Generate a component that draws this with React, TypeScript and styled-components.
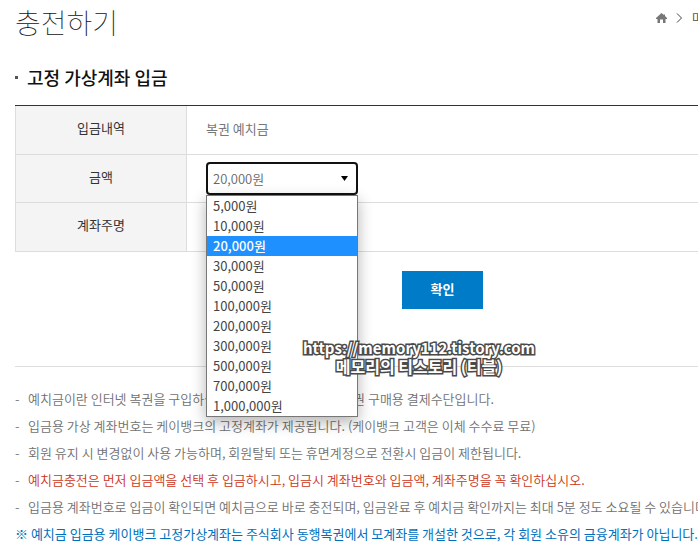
import React, { useState } from "react";
import styled, { createGlobalStyle } from "styled-components";

const AMOUNTS = [
  "5,000원",
  "10,000원",
  "20,000원",
  "30,000원",
  "50,000원",
  "100,000원",
  "200,000원",
  "300,000원",
  "500,000원",
  "700,000원",
  "1,000,000원",
];

const NOTES: { text: string; alert?: boolean }[] = [
  { text: "예치금이란 인터넷 복권을 구입하실 때 사용할 수 있는 전용 복권 구매용 결제수단입니다." },
  { text: "입금용 가상 계좌번호는 케이뱅크의 고정계좌가 제공됩니다. (케이뱅크 고객은 이체 수수료 무료)" },
  { text: "회원 유지 시 변경없이 사용 가능하며, 회원탈퇴 또는 휴면계정으로 전환시 입금이 제한됩니다." },
  {
    text: "예치금충전은 먼저 입금액을 선택 후 입금하시고, 입금시 계좌번호와 입금액, 계좌주명을 꼭 확인하십시오.",
    alert: true,
  },
  {
    text: "입금용 계좌번호로 입금이 확인되면 예치금으로 바로 충전되며, 입금완료 후 예치금 확인까지는 최대 5분 정도 소요될 수 있습니다.",
  },
];

const GlobalStyle = createGlobalStyle`
  * { box-sizing: border-box; }
  html { overflow: hidden; }
  body {
    margin: 0;
    background: #fff;
    color: #777;
    font-family: "Noto Sans CJK KR", "Noto Sans CJK SC", sans-serif;
    font-size: 13px;
    line-height: 20px;
  }
`;

const Page = styled.main`
  position: relative;
  min-width: 870px;
  padding: 0 0 0 15px;
`;

const Header = styled.header`
  display: flex;
  justify-content: space-between;
  align-items: flex-start;
`;

const Title = styled.h1`
  margin: 0;
  padding-top: 2px;
  font-size: 28px;
  line-height: 40px;
  font-weight: 100;
  color: #111;
`;

const Breadcrumb = styled.nav`
  display: flex;
  align-items: center;
  gap: 9px;
  width: 214px;
  padding-top: 8px;
  font-size: 12px;

  a {
    display: flex;
    color: #555;
    text-decoration: none;
  }
`;

const SectionTitle = styled.h2`
  display: flex;
  align-items: center;
  gap: 9px;
  margin: 22px 0 14px;
  font-size: 18px;
  line-height: 27px;
  font-weight: 500;
  color: #111;

  &::before {
    content: "";
    width: 3px;
    height: 3px;
    background: #555;
  }
`;

const FormTable = styled.table`
  width: 100%;
  border-collapse: separate;
  border-spacing: 0;
  border-top: 1px solid #333;
`;

const Row = styled.tr`
  height: 49px;

  &:nth-child(even) {
    height: 48px;
  }
`;

const LabelCell = styled.th`
  width: 172px;
  padding: 0 0 4px;
  border: 1px solid #ddd;
  border-top: 0;
  background: #f4f4f4;
  color: #333;
  font-weight: 400;
`;

const ValueCell = styled.td`
  padding: 0 19px 2px;
  border-bottom: 1px solid #ddd;
`;

const SelectCell = styled(ValueCell)`
  padding-bottom: 0;
`;

const Picker = styled.div`
  position: relative;
  width: 152px;
`;

const AmountSelect = styled.select`
  display: block;
  width: 100%;
  height: 33px;
  padding: 0 5px;
  appearance: none;
  border: 2px solid #111;
  border-radius: 4px;
  background: #fff;
  color: #666;
  font-family: inherit;
  font-size: 13px;
  font-weight: 350;
  outline: none;
`;

const Caret = styled.svg`
  position: absolute;
  top: 14px;
  right: 10px;
  pointer-events: none;
`;

const OptionList = styled.ul`
  position: absolute;
  z-index: 1;
  top: 100%;
  left: 0;
  width: 100%;
  margin: 0;
  padding: 0;
  list-style: none;
  border: 1px solid #777;
  background: #fff;
  box-shadow: 0 5px 14px rgba(0, 0, 0, 0.3);
`;

const OptionItem = styled.li<{ $selected: boolean }>`
  height: 20px;
  padding: 0 6px;
  background: ${(p) => (p.$selected ? "#1e90ff" : "transparent")};
  color: ${(p) => (p.$selected ? "#fff" : "#444")};
  font-weight: ${(p) => (p.$selected ? 500 : 400)};
  cursor: default;
`;

const Actions = styled.div`
  display: flex;
  justify-content: center;
  padding: 19px 0 57px;
  border-bottom: 1px solid #ddd;
`;

const ConfirmButton = styled.button`
  width: 81px;
  height: 38px;
  padding: 0 0 4px;
  border: 0;
  background: #007bc7;
  color: #fff;
  font-family: inherit;
  font-size: 13px;
  font-weight: 700;
`;

const NoteList = styled.ul`
  margin: 18px 0 0;
  padding: 0;
  list-style: none;
  white-space: nowrap;
`;

const Note = styled.li<{ $alert?: boolean }>`
  display: flex;
  gap: 8px;
  line-height: 27px;
  font-weight: 350;
  color: ${(p) => (p.$alert ? "#cc3520" : "#707070")};

  &::before {
    content: "-";
    width: 5px;
    color: #777;
  }
`;

const Footnote = styled.p`
  margin: 0;
  line-height: 27px;
  color: #0070bd;
  white-space: nowrap;
`;

const Watermark = styled.div`
  position: absolute;
  z-index: 2;
  top: 339px;
  left: 302px;
  width: 234px;
  text-align: center;
  font-size: 15px;
  line-height: 18px;
  font-weight: 700;
  color: #fff;
  white-space: nowrap;
  -webkit-text-stroke: 3px #4a4a4a;
  paint-order: stroke fill;
  pointer-events: none;
`;

const WatermarkName = styled.div`
  font-size: 16px;
`;

export default function App() {
  const [amount, setAmount] = useState("20,000원");

  return (
    <>
      <GlobalStyle />
      <Page>
        <Header>
          <Title>충전하기</Title>
          <Breadcrumb aria-label="현재 위치">
            <a href="#home" aria-label="홈">
              <svg width="11" height="10" viewBox="0 0 11 10">
                <path
                  d="M5.5 0 8 2V1.500H9V3L11 5V6H9.500V10H7V6.500H4V10H1.500V6H0V5Z"
                  fill="#777"
                />
              </svg>
            </a>
            <svg width="7" height="10" viewBox="0 0 7 10">
              <path d="M1 .5 5.5 5 1 9.5" fill="none" stroke="#444" />
            </svg>
            <a href="#mypage">마이페이지</a>
          </Breadcrumb>
        </Header>

        <SectionTitle>고정 가상계좌 입금</SectionTitle>
        <FormTable>
          <tbody>
            <Row>
              <LabelCell scope="row">입금내역</LabelCell>
              <ValueCell>복권 예치금</ValueCell>
            </Row>
            <Row>
              <LabelCell scope="row">
                <label htmlFor="amount">금액</label>
              </LabelCell>
              <SelectCell>
                <Picker>
                  <AmountSelect id="amount" value={amount} onChange={(e) => setAmount(e.target.value)}>
                    {AMOUNTS.map((a) => (
                      <option key={a}>{a}</option>
                    ))}
                  </AmountSelect>
                  <Caret width="7" height="5" viewBox="0 0 7 5">
                    <path d="M0 0H7L3.5 5Z" fill="#000" />
                  </Caret>
                  <OptionList role="listbox" aria-label="금액">
                    {AMOUNTS.map((a) => (
                      <OptionItem
                        key={a}
                        role="option"
                        aria-selected={a === amount}
                        $selected={a === amount}
                        onClick={() => setAmount(a)}
                      >
                        {a}
                      </OptionItem>
                    ))}
                  </OptionList>
                </Picker>
              </SelectCell>
            </Row>
            <Row>
              <LabelCell scope="row">계좌주명</LabelCell>
              <ValueCell />
            </Row>
          </tbody>
        </FormTable>

        <Actions>
          <ConfirmButton type="button">확인</ConfirmButton>
        </Actions>

        <NoteList>
          {NOTES.map((n) => (
            <Note key={n.text} $alert={n.alert}>
              {n.text}
            </Note>
          ))}
        </NoteList>
        <Footnote>
          ※ 예치금 입금용 케이뱅크 고정가상계좌는 주식회사 동행복권에서 모계좌를 개설한 것으로, 각 회원 소유의 금융계좌가 아닙니다.
        </Footnote>

        <Watermark>
          https://memory112.tistory.com
          <WatermarkName>메모리의 티스토리 (티블)</WatermarkName>
        </Watermark>
      </Page>
    </>
  );
}
